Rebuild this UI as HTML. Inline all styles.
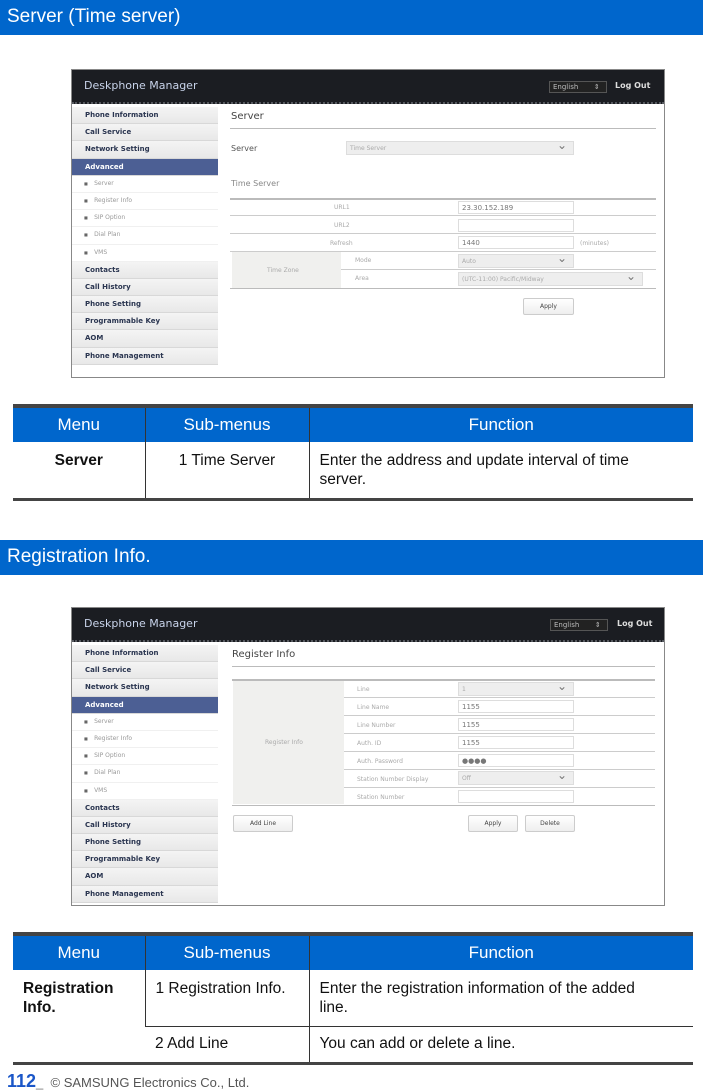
<!DOCTYPE html>
<html><head><meta charset="utf-8"><style>
*{margin:0;padding:0;box-sizing:border-box}
body{width:703px;height:1092px;position:relative;background:#fff;font-family:"Liberation Sans",Arial,sans-serif;overflow:hidden}
.a{position:absolute}
.band{position:absolute;left:0;width:703px;height:35px;background:#0066cc;color:#fff;font-size:19px;padding:6px 0 0 7px}
.shot{position:absolute;left:71px;width:594px;border:1px solid #888;background:#fff;overflow:hidden;font-family:"DejaVu Sans",sans-serif}
.hdr{position:absolute;left:0;top:0;width:100%;height:34px;background:#1b1d22;border-bottom:2px dotted #55585e}
.hdr .t{position:absolute;left:12px;top:9px;color:#c8d3ea;font-size:11px}
.lang{position:absolute;top:11px;width:58px;height:12px;border:1px solid #555;background:#222;color:#bbb;font-size:7px;padding:1px 3px;white-space:nowrap;overflow:hidden}
.lo{position:absolute;top:11px;color:#ddd;font-size:8px;font-weight:bold}
.side{position:absolute;left:0;top:37px;width:146px;background:#fff}
.side div{height:17.2px;font-size:7px;font-weight:bold;color:#2a3550;padding:4px 0 0 13px;background:linear-gradient(#f4f4f4,#e8e8e8);border-bottom:1px solid #d8d8d8}
.side div.on{background:#4c5f94;color:#fff}
.side div.s{background:#fff;font-weight:normal;color:#999;font-size:6px;padding-left:12px;border-bottom:1px solid #f0f0f0}
.side div.s:before{content:"■ ";font-size:4px;color:#666;margin-right:5px}
.ln{position:absolute;height:1px;background:#ccc}
.lb{position:absolute;font-size:6px;color:#aaa}
.in{position:absolute;height:13px;border:1px solid #ddd;background:#fff;font-size:7px;color:#777;padding:2px 3px}
.sel{position:absolute;height:14px;border:1px solid #ddd;background:#eee;font-size:6px;color:#aaa;padding:3px 3px}
.sel:after{content:"⌄";position:absolute;right:6px;top:-4px;font-size:12px;color:#777}
.btn{position:absolute;height:17px;border:1px solid #ccc;border-radius:2px;background:linear-gradient(#fff,#eee);font-size:6px;color:#444;text-align:center;padding-top:4px}
table{position:absolute;left:13px;width:680px;border-collapse:collapse;font-size:15.5px;color:#111;table-layout:fixed}
th{background:#0066cc;color:#fff;font-weight:normal;height:36px;font-size:17px;border-left:1px solid #333}
td{border-left:1px solid #333;vertical-align:top;padding:9px 10px;line-height:19px}
td.f{padding-right:40px}
tr>*:first-child{border-left:none}
</style></head><body>

<div class="band" style="top:0">Server (Time server)</div>

<div class="shot" style="top:69px;height:309px">
 <div class="hdr"><div class="t">Deskphone Manager</div><div class="lang" style="left:477px">English &nbsp; &nbsp; &nbsp; ⇕</div><div class="lo" style="left:543px">Log Out</div></div>
 <div class="side">
  <div>Phone Information</div><div>Call Service</div><div>Network Setting</div><div class="on">Advanced</div>
  <div class="s">Server</div><div class="s">Register Info</div><div class="s">SIP Option</div><div class="s">Dial Plan</div><div class="s">VMS</div>
  <div>Contacts</div><div>Call History</div><div>Phone Setting</div><div>Programmable Key</div><div>AOM</div><div>Phone Management</div>
 </div>
 <div class="a" style="left:159px;top:41px;font-size:10px;color:#444">Server</div>
 <div class="ln" style="left:158px;top:58px;width:426px;background:#bbb"></div>
 <div class="a" style="left:159px;top:74px;font-size:8px;color:#555">Server</div>
 <div class="sel" style="left:274px;top:71px;width:228px">Time Server</div>
 <div class="a" style="left:159px;top:109px;font-size:8px;color:#888">Time Server</div>
 <div class="ln" style="left:158px;top:128px;width:426px;height:2px;background:#bbb"></div>
 <div class="ln" style="left:158px;top:145px;width:426px"></div>
 <div class="ln" style="left:158px;top:163px;width:426px"></div>
 <div class="ln" style="left:158px;top:181px;width:426px"></div>
 <div class="ln" style="left:269px;top:199px;width:315px"></div>
 <div class="ln" style="left:158px;top:218px;width:426px;background:#bbb"></div>
 <div class="a" style="left:160px;top:182px;width:109px;height:36px;background:#f0f0ee"></div>
 <div class="lb" style="left:195px;top:197px">Time Zone</div>
 <div class="lb" style="left:262px;top:134px">URL1</div>
 <div class="lb" style="left:262px;top:152px">URL2</div>
 <div class="lb" style="left:258px;top:170px">Refresh</div>
 <div class="lb" style="left:283px;top:187px">Mode</div>
 <div class="lb" style="left:283px;top:205px">Area</div>
 <div class="in" style="left:386px;top:131px;width:116px">23.30.152.189</div>
 <div class="in" style="left:386px;top:149px;width:116px"></div>
 <div class="in" style="left:386px;top:166px;width:116px">1440</div>
 <div class="lb" style="left:508px;top:170px">(minutes)</div>
 <div class="sel" style="left:386px;top:184px;width:116px">Auto</div>
 <div class="sel" style="left:386px;top:202px;width:185px">(UTC-11:00) Pacific/Midway</div>
 <div class="btn" style="left:451px;top:228px;width:51px">Apply</div>
</div>

<table style="top:404px;border-top:4px solid #444;border-bottom:3px solid #444">
 <tr><th style="width:132px">Menu</th><th style="width:164px">Sub-menus</th><th>Function</th></tr>
 <tr style="height:56px"><td style="text-align:center;font-weight:bold">Server</td><td style="text-align:center">1 Time Server</td><td class="f">Enter the address and update interval of time server.</td></tr>
</table>

<div class="band" style="top:540px">Registration Info.</div>

<div class="shot" style="top:607px;height:299px">
 <div class="hdr"><div class="t">Deskphone Manager</div><div class="lang" style="left:478px">English &nbsp; &nbsp; &nbsp; ⇕</div><div class="lo" style="left:545px">Log Out</div></div>
 <div class="side">
  <div>Phone Information</div><div>Call Service</div><div>Network Setting</div><div class="on">Advanced</div>
  <div class="s">Server</div><div class="s">Register Info</div><div class="s">SIP Option</div><div class="s">Dial Plan</div><div class="s">VMS</div>
  <div>Contacts</div><div>Call History</div><div>Phone Setting</div><div>Programmable Key</div><div>AOM</div><div>Phone Management</div>
 </div>
 <div class="a" style="left:160px;top:41px;font-size:10px;color:#444">Register Info</div>
 <div class="ln" style="left:160px;top:58px;width:423px;background:#bbb"></div>
 <div class="ln" style="left:160px;top:71px;width:423px;height:2px;background:#bbb"></div>
 <div class="a" style="left:161px;top:73px;width:111px;height:123px;background:#f0f0ee"></div>
 <div class="lb" style="left:193px;top:131px">Register Info</div>
 <div class="ln" style="left:272px;top:89px;width:311px"></div>
 <div class="ln" style="left:272px;top:107px;width:311px"></div>
 <div class="ln" style="left:272px;top:125px;width:311px"></div>
 <div class="ln" style="left:272px;top:143px;width:311px"></div>
 <div class="ln" style="left:272px;top:161px;width:311px"></div>
 <div class="ln" style="left:272px;top:179px;width:311px"></div>
 <div class="ln" style="left:160px;top:197px;width:423px;background:#bbb"></div>
 <div class="lb" style="left:285px;top:78px">Line</div>
 <div class="lb" style="left:285px;top:96px">Line Name</div>
 <div class="lb" style="left:285px;top:114px">Line Number</div>
 <div class="lb" style="left:285px;top:132px">Auth. ID</div>
 <div class="lb" style="left:285px;top:150px">Auth. Password</div>
 <div class="lb" style="left:285px;top:168px">Station Number Display</div>
 <div class="lb" style="left:285px;top:186px">Station Number</div>
 <div class="sel" style="left:386px;top:74px;width:116px">1</div>
 <div class="in" style="left:386px;top:92px;width:116px">1155</div>
 <div class="in" style="left:386px;top:110px;width:116px">1155</div>
 <div class="in" style="left:386px;top:128px;width:116px">1155</div>
 <div class="in" style="left:386px;top:146px;width:116px">●●●●</div>
 <div class="sel" style="left:386px;top:163px;width:116px">Off</div>
 <div class="in" style="left:386px;top:182px;width:116px"></div>
 <div class="btn" style="left:161px;top:207px;width:60px">Add Line</div>
 <div class="btn" style="left:396px;top:207px;width:50px">Apply</div>
 <div class="btn" style="left:453px;top:207px;width:50px">Delete</div>
</div>

<table style="top:932px;border-top:4px solid #444;border-bottom:3px solid #444">
 <tr><th style="width:132px">Menu</th><th style="width:164px">Sub-menus</th><th>Function</th></tr>
 <tr style="height:55px"><td rowspan="2" style="font-weight:bold">Registration Info.</td><td>1 Registration Info.</td><td class="f">Enter the registration information of the added line.</td></tr>
 <tr style="height:34px;border-top:1px solid #333"><td style="padding-top:7px">2 Add Line</td><td style="padding-top:7px">You can add or delete a line.</td></tr>
</table>

<div class="a" style="left:7px;top:1071px;font-size:18px;font-weight:bold;color:#1a56c8">112<span style="font-size:13px;font-weight:normal;color:#777">_ &nbsp;</span><span style="font-size:13px;font-weight:normal;color:#555">© SAMSUNG Electronics Co., Ltd.</span></div>
</body></html>
